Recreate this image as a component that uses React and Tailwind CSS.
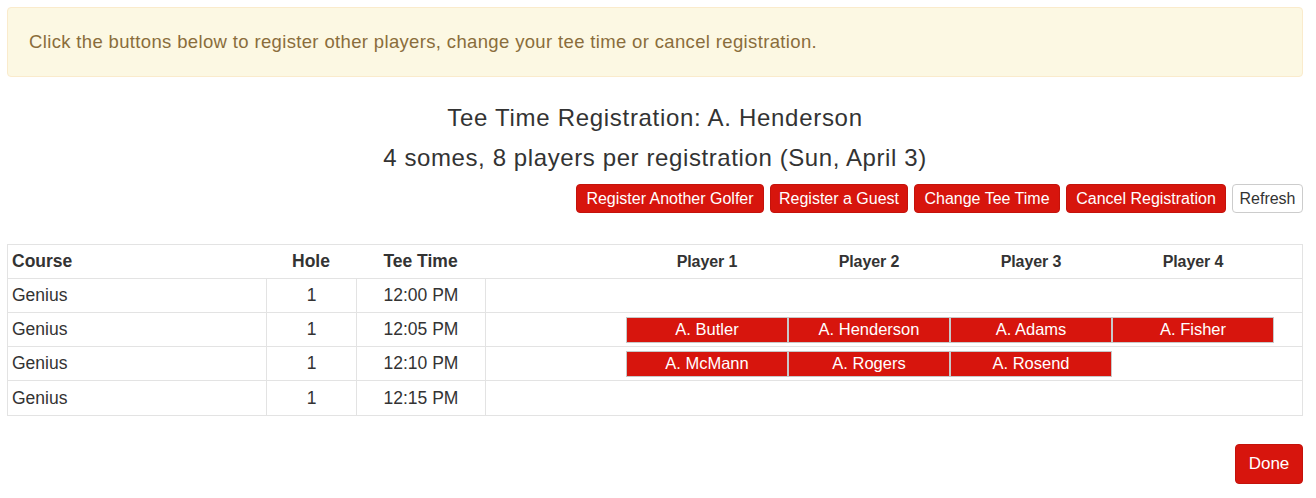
import React from "react";

const rows = [
  { time: "12:00 PM", players: [] },
  { time: "12:05 PM", players: ["A. Butler", "A. Henderson", "A. Adams", "A. Fisher"] },
  { time: "12:10 PM", players: ["A. McMann", "A. Rogers", "A. Rosend"] },
  { time: "12:15 PM", players: [] },
];

const btn = "h-[29px] rounded-[4px] bg-[#d7150d] text-white text-[16px] leading-none border border-[#c4120b] flex items-center justify-center whitespace-nowrap";

export default function App() {
  return (
    <div className="w-[1316px] h-[498px] bg-white pl-[7px] pr-[13px] pt-[7px] text-[#333]" style={{ fontFamily: '"Liberation Sans", Arial, sans-serif' }}>
      <div className="h-[70px] rounded-[4px] border border-[#faebcc] bg-[#fcf8e3] text-[#8a6d3b] text-[18.5px] tracking-[0.35px] flex items-center pl-[21px]">
        Click the buttons below to register other players, change your tee time or cancel registration.
      </div>
      <div className="mt-[28px] text-center text-[24px] tracking-[0.7px] leading-[26px]">Tee Time Registration: A. Henderson</div>
      <div className="mt-[14px] text-center text-[24px] tracking-[0.6px] leading-[26px]">4 somes, 8 players per registration (Sun, April 3)</div>
      <div className="mt-[13px] flex justify-end gap-[6px]">
        <button className={btn + " w-[188px]"}>Register Another Golfer</button>
        <button className={btn + " w-[138px]"}>Register a Guest</button>
        <button className={btn + " w-[146px]"}>Change Tee Time</button>
        <button className={btn + " w-[160px]"}>Cancel Registration</button>
        <button className="w-[71px] h-[29px] rounded-[4px] bg-white text-[#333] text-[16px] leading-none border border-[#ccc] flex items-center justify-center">Refresh</button>
      </div>
      <div className="mt-[31px] border border-[#e3e3e3]">
        <div className="h-[34px] flex items-center font-bold border-b border-[#e3e3e3]">
          <div className="w-[258px] pl-[4px] text-[17.5px]">Course</div>
          <div className="w-[90px] text-center text-[17.5px]">Hole</div>
          <div className="w-[129px] text-center text-[17.5px]">Tee Time</div>
          <div className="w-[141px]" />
          {["Player 1", "Player 2", "Player 3", "Player 4"].map((p) => (
            <div key={p} className="w-[162px] text-center text-[16px] tracking-[-0.1px]">{p}</div>
          ))}
        </div>
        {rows.map((r, i) => (
          <div key={r.time} className={"h-[34px] flex text-[17.5px] " + (i < rows.length - 1 ? "border-b border-[#e3e3e3]" : "")}>
            <div className="w-[259px] pl-[4px] flex items-center border-r border-[#e3e3e3]">Genius</div>
            <div className="w-[90px] flex items-center justify-center border-r border-[#e3e3e3]">1</div>
            <div className="w-[129px] flex items-center justify-center border-r border-[#e3e3e3]">{r.time}</div>
            <div className="w-[140px]" />
            <div className="flex items-center">
              {r.players.map((p) => (
                <div key={p} className="w-[162px] h-[26px] bg-[#d7150d] border border-[#c8c8c8] text-white text-[16.5px] flex items-center justify-center">{p}</div>
              ))}
            </div>
          </div>
        ))}
      </div>
      <div className="mt-[28px] flex justify-end">
        <button className="w-[68px] h-[40px] rounded-[4px] bg-[#d7150d] text-white text-[17px] border border-[#c4120b]">Done</button>
      </div>
    </div>
  );
}
